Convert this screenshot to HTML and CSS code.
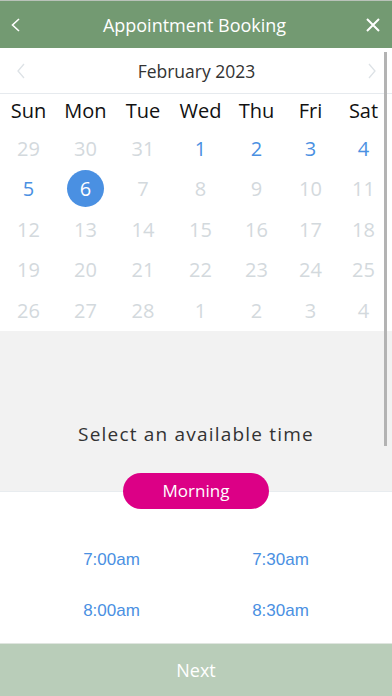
FILE: index.html
```html
<!DOCTYPE html>
<html lang="en">
<head>
    <meta charset="UTF-8">
    <meta name="viewport" content="width=device-width, initial-scale=1.0">
    <title>Appointment Booking</title>
    <link rel="stylesheet" href="styles.css">
</head>
<body>
    <div class="app">
        <header class="topbar">
            <button class="icon-btn">
                <svg width="12" height="16" viewBox="0 0 12 16"><path d="M9 2 L2.5 8 L9 14" fill="none" stroke="#fff" stroke-width="1.6"/></svg>
            </button>
            <h1>Appointment Booking</h1>
            <button class="icon-btn">
                <svg width="16" height="16" viewBox="0 0 16 16"><path d="M2 2 L14 14 M14 2 L2 14" fill="none" stroke="#fff" stroke-width="2"/></svg>
            </button>
        </header>

        <div class="scroller">
            <div class="month-bar">
                <svg class="chev" width="10" height="16" viewBox="0 0 10 16"><path d="M8 1 L2 8 L8 15" fill="none" stroke="#dde2e6" stroke-width="1.3"/></svg>
                <span class="month">February 2023</span>
                <svg class="chev" width="10" height="16" viewBox="0 0 10 16"><path d="M2 1 L8 8 L2 15" fill="none" stroke="#dde2e6" stroke-width="1.3"/></svg>
            </div>

            <div class="calendar" id="calendar">
                <div class="wd">Sun</div>
                <div class="wd">Mon</div>
                <div class="wd">Tue</div>
                <div class="wd">Wed</div>
                <div class="wd">Thu</div>
                <div class="wd">Fri</div>
                <div class="wd">Sat</div>
            </div>

            <div class="time-head">
                <p>Select an available time</p>
            </div>
            <div class="scrollbar"></div>
        </div>

        <div class="slots">
            <button class="period">Morning</button>
            <div class="times">
                <span>7:00am</span>
                <span>7:30am</span>
                <span>8:00am</span>
                <span>8:30am</span>
            </div>
        </div>

        <button class="next">Next</button>
    </div>

    <script>
        const cal = document.getElementById('calendar');
        const days = [29, 30, 31];
        for (let d = 1; d <= 28; d++) days.push(d);
        days.push(1, 2, 3, 4);
        const open = [1, 2, 3, 4, 5];

        days.forEach((d, i) => {
            const cell = document.createElement('div');
            cell.className = 'day';
            const inMonth = i >= 3 && i < 31;
            if (inMonth && d === 6) {
                cell.classList.add('selected');
            } else if (inMonth && open.includes(d)) {
                cell.classList.add('open');
            }
            const num = document.createElement('span');
            num.textContent = d;
            cell.appendChild(num);
            cal.appendChild(cell);
        });
    </script>
</body>
</html>
```

FILE: styles.css
```css
body {
    margin: 0;
    font-family: "Open Sans", Arial, sans-serif;
    background-color: #fff;
}

.app {
    width: 392px;
    height: 696px;
    display: flex;
    flex-direction: column;
    overflow: hidden;
}

.topbar {
    height: 47px;
    border-top: 1px solid #b9c2b9;
    background-color: #739a72;
    display: flex;
    align-items: center;
    justify-content: space-between;
    padding: 0 8px 0 5px;
}

.topbar h1 {
    margin: 0;
    font-size: 18px;
    font-weight: normal;
    color: #fff;
}

.icon-btn {
    background: none;
    border: none;
    padding: 0;
    width: 22px;
    height: 22px;
    display: flex;
    align-items: center;
    justify-content: center;
    cursor: pointer;
}

.scroller {
    position: relative;
}

.month-bar {
    height: 45px;
    border-bottom: 1px solid #e6eaee;
    display: flex;
    align-items: center;
    justify-content: space-between;
    padding: 0 15px 0 16px;
}

.month {
    font-size: 17.5px;
    color: #333;
}

.calendar {
    display: grid;
    grid-template-columns: 57px 57px 58px 57px 55px 53px 53px;
    grid-template-rows: 34px;
    grid-auto-rows: 40.5px;
}

.wd {
    font-size: 20px;
    color: #111;
    text-align: center;
    line-height: 34px;
}

.day {
    display: flex;
    align-items: center;
    justify-content: center;
    font-size: 20px;
    color: #d3d9dd;
}

.day.open {
    color: #4a90e2;
}

.day.selected span {
    width: 37px;
    height: 37px;
    border-radius: 50%;
    background-color: #4a90e2;
    color: #fff;
    display: flex;
    align-items: center;
    justify-content: center;
    padding-bottom: 1px;
    box-sizing: border-box;
}

.time-head {
    height: 160px;
    background-color: #f2f2f2;
    border-bottom: 1px solid #e8ecef;
    display: flex;
    align-items: flex-start;
    justify-content: center;
}

.time-head p {
    margin: 90px 0 0;
    font-size: 19px;
    letter-spacing: 1.2px;
    color: #333;
}

.scrollbar {
    position: absolute;
    right: 5px;
    top: 4px;
    width: 3px;
    height: 394px;
    background-color: #b3b3b3;
}

.slots {
    flex: 1;
    display: flex;
    flex-direction: column;
    align-items: center;
}

.period {
    margin-top: -19px;
    width: 146px;
    height: 36px;
    border: none;
    border-radius: 18px;
    background-color: #dc0086;
    color: #fff;
    font-family: "Open Sans", Arial, sans-serif;
    font-size: 17px;
    position: relative;
}

.times {
    display: grid;
    grid-template-columns: 111px 111px;
    column-gap: 58px;
    row-gap: 31px;
    margin-top: 41px;
}

.times span {
    text-align: center;
    font-family: "Liberation Sans", Arial, sans-serif;
    font-size: 17px;
    color: #4a90e2;
}

.next {
    height: 53px;
    border: none;
    border-top: 1px solid #dfe5df;
    background-color: #b9cdb9;
    color: #fff;
    font-family: "Open Sans", Arial, sans-serif;
    font-size: 18px;
    width: 100%;
}
```
